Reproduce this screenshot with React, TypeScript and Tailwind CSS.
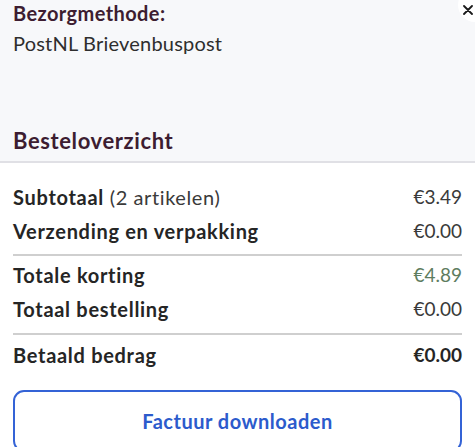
import React from 'react';

const rowsTop = [
  { label: 'Subtotaal', extra: '(2 artikelen)', value: '€3.49' },
  { label: 'Verzending en verpakking', value: '€0.00' },
];

const rowsMid = [
  { label: 'Totale korting', value: '€4.89', green: true },
  { label: 'Totaal bestelling', value: '€0.00' },
];

const Row: React.FC<{ label: string; extra?: string; value: string; green?: boolean; strong?: boolean }> = ({
  label,
  extra,
  value,
  green,
  strong,
}) => (
  <div className="flex items-center justify-between h-[34px] leading-[34px]">
    <span className="text-[20px] font-bold tracking-[0.7px] text-[#252525]">
      {label}
      {extra && <span className="font-normal tracking-[0.6px] text-[#3a3a3a]"> {extra}</span>}
    </span>
    <span
      className={
        strong
          ? 'text-[19px] font-bold text-[#252525]'
          : green
          ? 'text-[19px] text-[#5e7d5f]'
          : 'text-[19px] text-[#3a3a3a]'
      }
    >
      {value}
    </span>
  </div>
);

const App: React.FC = () => {
  return (
    <div
      className="w-[475px] h-[447px] overflow-hidden bg-white relative"
      style={{ fontFamily: 'Lato, "Noto Sans", sans-serif' }}
    >
      {/* Close button, cut off at the edge */}
      <div className="absolute left-[458px] -top-[12px] w-[34px] h-[34px] rounded-full bg-white">
        <svg className="absolute left-[5px] top-[17px]" width="10" height="10" viewBox="0 0 10 10">
          <path d="M1 1L9 9M9 1L1 9" stroke="#1a1a1a" strokeWidth="1.8" strokeLinecap="round" />
        </svg>
      </div>

      {/* Delivery section */}
      <div className="bg-[#f7f8fa] h-[163px] px-[13px] pt-[1px] border-b-2 border-[#e0e0e5]">
        <div className="text-[20px] leading-[24px] font-bold tracking-[0.4px] text-[#3d1d31]">Bezorgmethode:</div>
        <div className="text-[20px] leading-[30px] mt-[3px] tracking-[0.2px] text-[#2e2e2e]">PostNL Brievenbuspost</div>
        <div className="text-[22px] leading-[30px] mt-[68px] font-bold tracking-[0.6px] text-[#3d1d31]">Besteloverzicht</div>
      </div>

      {/* Summary */}
      <div className="px-[13px] pt-[17px]">
        {rowsTop.map((r) => (
          <Row key={r.label} {...r} />
        ))}
        <div className="h-[2px] bg-[#cfcfcf] mt-[6px] mb-[2px]" />
        {rowsMid.map((r) => (
          <Row key={r.label} {...r} />
        ))}
        <div className="h-[2px] bg-[#cfcfcf] mt-[7px] mb-[3px]" />
        <Row label="Betaald bedrag" value="€0.00" strong />

        <button className="mt-[18px] w-full h-[62px] rounded-[11px] border-2 border-[#3463d6] text-[#2c5bcc] font-bold text-[20px] tracking-[0.5px] bg-white">
          Factuur downloaden
        </button>
      </div>
    </div>
  );
};

export default App;
